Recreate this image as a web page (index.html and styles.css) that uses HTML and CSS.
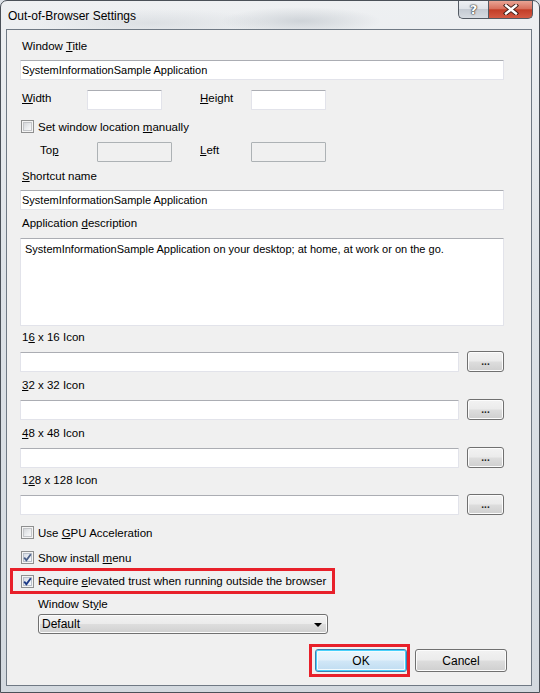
FILE: index.html
```html
<!DOCTYPE html>
<html>
<head>
<meta charset="utf-8">
<link rel="stylesheet" href="styles.css">
</head>
<body>
<div class="window">
  <div class="titlebar">
    <span class="title">Out-of-Browser Settings</span>
    <div class="caption">
      <div class="cap-help">?</div>
      <div class="cap-close">
        <svg width="16" height="11" viewBox="0 0 16 11"><path d="M3 1.5 L13 9.5 M13 1.5 L3 9.5" stroke="#3a1a14" stroke-width="4.2" stroke-linecap="square"/><path d="M3 1.5 L13 9.5 M13 1.5 L3 9.5" stroke="#fff" stroke-width="2.4" stroke-linecap="square"/></svg>
      </div>
    </div>
  </div>
  <div class="client">
    <div class="label">Window <u>T</u>itle</div>
    <div class="tb full mt6">SystemInformationSample Application</div>

    <div class="row mt10">
      <span class="lbl w67"><u>W</u>idth</span>
      <div class="tb small"></div>
      <span class="lbl w53 ml36"><u>H</u>eight</span>
      <div class="tb small"></div>
    </div>

    <div class="cbrow mt10">
      <span class="cb"></span><span>Set window location <u>m</u>anually</span>
    </div>

    <div class="row mt9">
      <span class="lbl w59 ml18">To<u>p</u></span>
      <div class="tb small disabled"></div>
      <span class="lbl w53 ml26"><u>L</u>eft</span>
      <div class="tb small disabled"></div>
    </div>

    <div class="label mt6"><u>S</u>hortcut name</div>
    <div class="tb full mt6">SystemInformationSample Application</div>

    <div class="label mt5">Application <u>d</u>escription</div>
    <div class="tb full area mt7">SystemInformationSample Application on your desktop; at home, at work or on the go.</div>

    <div class="label mt3">1<u>6</u> x 16 Icon</div>
    <div class="iconrow mt7"><div class="tb icon"></div><div class="btn dots">...</div></div>

    <div class="label mt5"><u>3</u>2 x 32 Icon</div>
    <div class="iconrow mt7"><div class="tb icon"></div><div class="btn dots">...</div></div>

    <div class="label mt5"><u>4</u>8 x 48 Icon</div>
    <div class="iconrow mt7"><div class="tb icon"></div><div class="btn dots">...</div></div>

    <div class="label mt4">1<u>2</u>8 x 128 Icon</div>
    <div class="iconrow mt7"><div class="tb icon"></div><div class="btn dots">...</div></div>

    <div class="cbrow mt11">
      <span class="cb"></span><span>Use <u>G</u>PU Acceleration</span>
    </div>
    <div class="cbrow mt12">
      <span class="cb checked"><svg width="9" height="9" viewBox="0 0 9 9"><path d="M1.2 4.6 L3.4 7.2 L7.8 1.2" fill="none" stroke="#4a5f88" stroke-width="1.8"/></svg></span><span>Show install <u>m</u>enu</span>
    </div>
    <div class="redbox trust">
      <span class="cb checked"><svg width="9" height="9" viewBox="0 0 9 9"><path d="M1.2 4.6 L3.4 7.2 L7.8 1.2" fill="none" stroke="#1c3a86" stroke-width="1.9"/></svg></span><span>Require <u>e</u>levated trust when running outside the browser</span>
    </div>
    <div class="label indent mt2">Window St<u>y</u>le</div>
    <div class="combo mt2"><span>Default</span><span class="arrow"></span></div>

    <div class="buttons">
      <div class="redbox okbox"><div class="btn push focused">OK</div></div>
      <div class="btn push">Cancel</div>
    </div>
  </div>
</div>
</body>
</html>
```

FILE: styles.css
```css
html, body {
  margin: 0;
  padding: 0;
}
body {
  font-family: "Liberation Sans", Arial, sans-serif;
  font-size: 11.5px;
  color: #000;
  background: #dde2e8;
}
u { text-underline-offset: 1px; }

.window {
  width: 540px;
  height: 693px;
  box-sizing: border-box;
  border: 1px solid #4a5058;
  border-radius: 7px 7px 0 0;
  padding: 0 7px 6px 5px;
  display: flex;
  flex-direction: column;
  background:
    radial-gradient(ellipse 80px 14px at 300px 20px, rgba(150,160,170,0.35), transparent),
    radial-gradient(ellipse 120px 14px at 150px 22px, rgba(170,178,186,0.25), transparent),
    linear-gradient(180deg, #eef0f2 0%, #dde2e7 40%, #d3d9df 100%);
}

.titlebar {
  height: 28px;
  display: flex;
  justify-content: space-between;
  align-items: flex-start;
}
.title {
  margin-left: 2px;
  margin-top: 7px;
  font-size: 12px;
  line-height: 16px;
  color: #000;
}
.caption {
  display: flex;
  margin-right: -1px;
}
.cap-help, .cap-close {
  height: 18px;
  box-sizing: border-box;
  border: 1px solid #535a63;
  border-top: none;
  display: flex;
  align-items: center;
  justify-content: center;
}
.cap-help {
  width: 30px;
  border-radius: 0 0 0 5px;
  border-right: none;
  background: linear-gradient(180deg, #eef0f3 0%, #dfe3e8 45%, #c4cad2 50%, #d6dbe1 100%);
  font-family: "DejaVu Sans", sans-serif;
  font-weight: bold;
  font-size: 13px;
  color: #fff;
  text-shadow: 0 0 1px #333, 0 0 1px #333, 0 0 2px #333;
}
.cap-close {
  width: 45px;
  border-radius: 0 0 5px 0;
  background: linear-gradient(180deg, #e9a494 0%, #d8705d 45%, #c23d27 52%, #d45a43 100%);
}

.client {
  flex: 1;
  border: 1px solid #6f7984;
  background: #f0f0f0;
  padding: 8px 26px 0 13px;
  display: flex;
  flex-direction: column;
  align-items: flex-start;
}

.label {
  height: 16px;
  line-height: 16px;
  padding-left: 2px;
  white-space: nowrap;
}
.label.indent { padding-left: 18px; }

.tb {
  box-sizing: border-box;
  height: 20px;
  background: #fff;
  border: 1px solid #e2e3ea;
  border-top-color: #abadb3;
  border-radius: 1px;
  font-size: 11px;
  line-height: 18px;
  padding: 0 1px;
  white-space: nowrap;
}
.tb.full { width: 484px; align-self: flex-start; }
.tb.small { width: 75px; }
.tb.disabled { background: #f0f0f0; border-color: #adb2b5; }
.tb.area {
  height: 88px;
  padding: 4px 4px;
  line-height: 12px;
}
.tb.icon { width: 439px; }

.row {
  display: flex;
  align-items: center;
  height: 20px;
}
.lbl {
  display: inline-block;
  padding-left: 2px;
  box-sizing: border-box;
  margin-top: -4px;
  flex: none;
}
.w67 { width: 67px; }
.w53 { width: 53px; }
.w59 { width: 59px; }
.ml36 { margin-left: 36px; }
.ml26 { margin-left: 26px; }
.ml18 { margin-left: 18px; }

.cbrow, .trust {
  display: flex;
  align-items: center;
  height: 13px;
  white-space: nowrap;
}
.cbrow .cb { margin-left: 1px; margin-right: 4px; }

.cb {
  width: 13px;
  height: 13px;
  box-sizing: border-box;
  border: 1px solid #8e8f8f;
  background: #f4f4f4;
  position: relative;
  flex: none;
  display: flex;
  align-items: center;
  justify-content: center;
}
.cb::before {
  content: "";
  position: absolute;
  left: 1px; top: 1px; right: 1px; bottom: 1px;
  border: 1px solid #c3c5c8;
  background: linear-gradient(135deg, #d5d7da 0%, #eceef0 60%, #f8f8f8 100%);
}
.cb.checked::before {
  border-color: #b8bfc9;
  background: linear-gradient(135deg, #d8dde6 0%, #eef1f5 70%, #fafafa 100%);
}
.cb svg { position: relative; }

.redbox {
  border: 3px solid #e8202a;
  box-sizing: border-box;
}
.trust {
  height: 26px;
  width: 325px;
  margin-left: -10px;
  margin-top: 4px;
  padding-left: 8px;
}
.trust .cb { margin-right: 4px; }

.iconrow {
  display: flex;
  align-items: center;
  gap: 8px;
  height: 20px;
}
.btn {
  box-sizing: border-box;
  border: 1px solid #707070;
  border-radius: 3px;
  background: linear-gradient(180deg, #f2f2f2 0%, #ebebeb 48%, #dddddd 52%, #cfcfcf 100%);
  box-shadow: inset 0 0 0 1px #fcfcfc;
  display: flex;
  align-items: center;
  justify-content: center;
  text-align: center;
}
.dots {
  width: 37px;
  height: 21px;
  margin-top: -1px;
  font-size: 10px;
  font-weight: bold;
  line-height: 12px;
  color: #222;
  padding-top: 1px;
}

.combo {
  width: 290px;
  height: 20px;
  margin-left: 18px;
  box-sizing: border-box;
  border: 1px solid #707070;
  border-radius: 3px;
  background: linear-gradient(180deg, #f2f2f2 0%, #ebebeb 48%, #dddddd 52%, #cfcfcf 100%);
  box-shadow: inset 0 0 0 1px #fcfcfc;
  display: flex;
  align-items: center;
  justify-content: space-between;
  padding: 0 5px 0 3px;
  font-size: 12px;
}
.arrow {
  width: 0; height: 0;
  border-left: 4px solid transparent;
  border-right: 4px solid transparent;
  border-top: 4px solid #000;
  margin-top: 1px;
}

.buttons {
  display: flex;
  align-self: stretch;
  justify-content: flex-end;
  align-items: center;
  gap: 5px;
  margin-top: 10px;
  margin-right: -2px;
}
.okbox {
  padding: 2px 0 2px 3px;
  height: 33px;
}
.push {
  width: 92px;
  height: 23px;
  font-size: 12px;
}
.focused {
  border-color: #3c7fb1;
  box-shadow: inset 0 0 0 1px #48d0fb, inset 0 0 0 2px #f4fbfe;
  background: linear-gradient(180deg, #eaf6fd 0%, #e2f0fa 48%, #d1e7f7 52%, #bfdcf1 100%);
}

.mt2 { margin-top: 2px; }
.mt3 { margin-top: 3px; }
.mt4 { margin-top: 4px; }
.mt5 { margin-top: 5px; }
.mt6 { margin-top: 6px; }
.mt7 { margin-top: 7px; }
.mt9 { margin-top: 9px; }
.mt10 { margin-top: 10px; }
.mt11 { margin-top: 11px; }
.mt12 { margin-top: 12px; }
```
